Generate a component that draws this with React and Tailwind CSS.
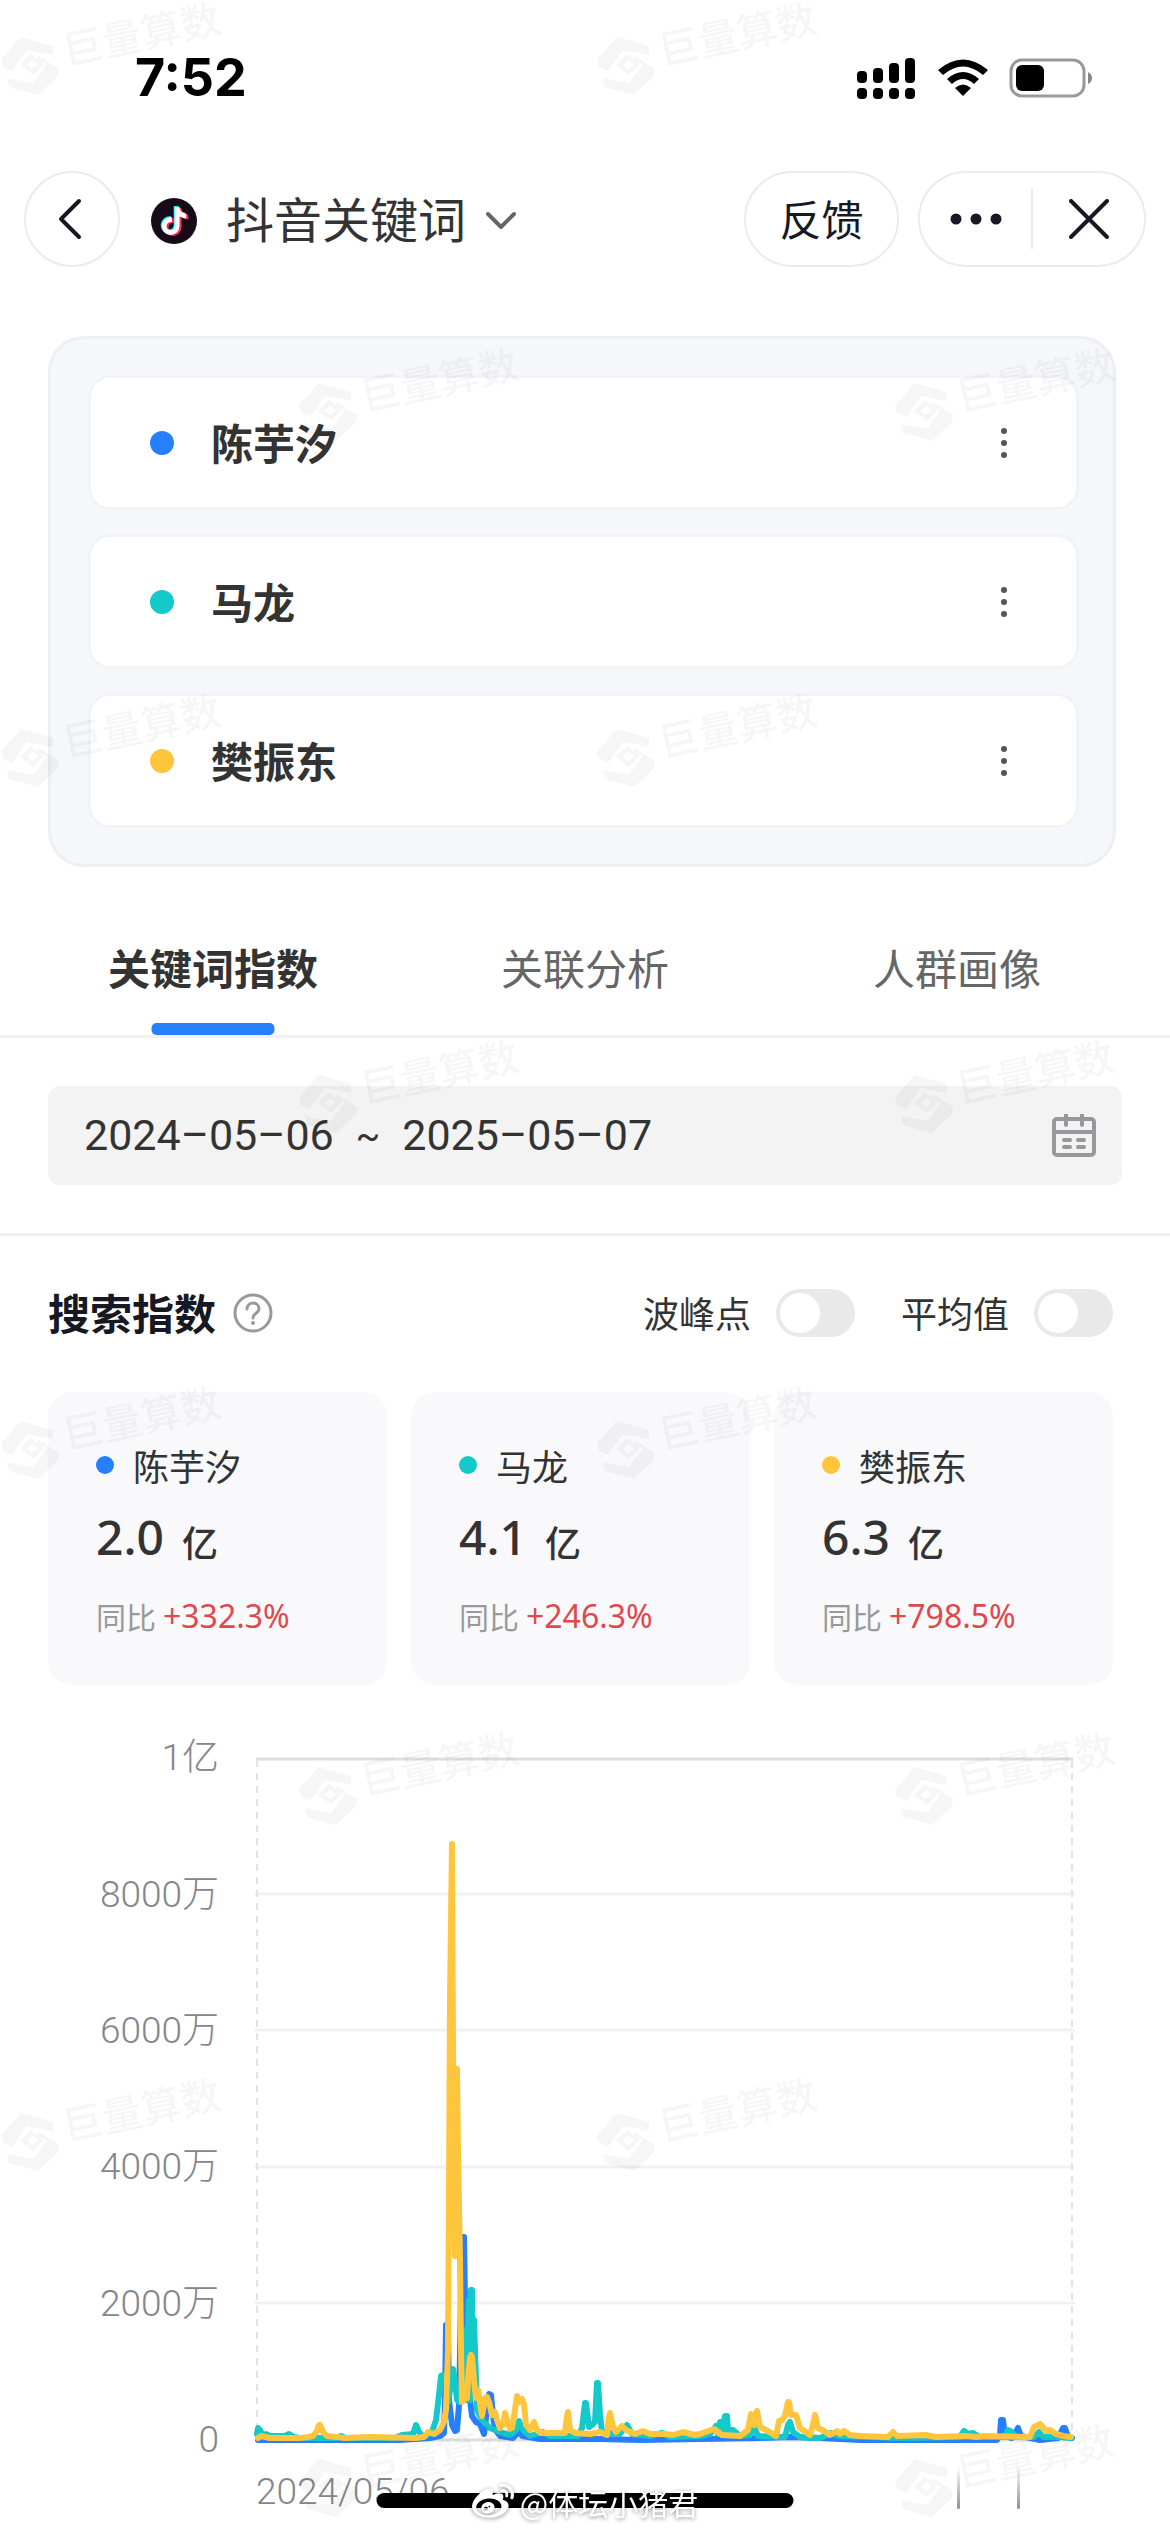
import React from "react";
import { FaTiktok, FaWeibo } from "react-icons/fa";

const SANS = "font-['Noto_Sans_CJK_SC',sans-serif]";
const LATIN = "font-['Roboto','Noto_Sans_CJK_SC',sans-serif]";
const NUMERIC = "font-['Noto_Sans','Noto_Sans_CJK_SC',sans-serif]";

const keywords = [
  { name: "陈芋汐", dot: "bg-[#267fff]", total: "2.0", growth: "+332.3%" },
  { name: "马龙", dot: "bg-[#14c9c9]", total: "4.1", growth: "+246.3%" },
  { name: "樊振东", dot: "bg-[#ffc53d]", total: "6.3", growth: "+798.5%" },
];

const tabs = ["关键词指数", "关联分析", "人群画像"];
const yTicks = ["1亿", "8000万", "6000万", "4000万", "2000万", "0"];

const blueLine =
  "258,2440 400,2440 430,2438 440,2436 444,2433 445,2400 446,2325 448,2325 449,2400 452,2425 455,2431 457,2430 459,2405 461,2300 463,2237 464,2237 465,2300 467,2395 470,2400 472,2416 476,2422 480,2424 484,2434 487,2410 489,2394 491,2395 493,2415 495,2429 500,2436 513,2438 516,2435 518,2428 522,2436 540,2439 600,2439 640,2440 700,2439 760,2438 790,2437 820,2438 860,2440 997,2440 1000,2435 1001,2420 1003,2420 1005,2436 1012,2438 1017,2430 1018,2428 1021,2436 1040,2440 1058,2438 1063,2428 1065,2428 1068,2437 1072,2438";
const tealLine =
  "257,2434 258,2428 260,2430 263,2436 266,2434 270,2436 285,2436 289,2434 294,2437 300,2438 336,2438 341,2436 346,2438 395,2438 402,2435 413,2434 416,2425 419,2432 424,2437 432,2432 436,2420 439,2395 441,2376 443,2375 446,2376 448,2402 451,2385 453,2369 455,2380 457,2400 459,2402 462,2400 464,2330 466,2400 469,2300 470,2400 471,2290 472,2290 473,2390 474,2320 475,2350 477,2410 482,2420 490,2428 500,2432 510,2435 516,2430 519,2421 523,2430 530,2436 543,2432 550,2436 578,2436 582,2428 585,2403 586,2403 589,2427 593,2424 595,2422 597,2383 598,2383 600,2415 602,2432 620,2434 627,2425 632,2434 650,2436 662,2433 670,2437 700,2436 710,2434 716,2426 718,2434 720,2422 722,2434 725,2416 727,2416 728,2430 733,2430 740,2436 750,2435 754,2427 758,2436 785,2437 788,2425 790,2422 793,2432 800,2437 820,2438 831,2433 840,2436 900,2438 960,2437 964,2431 968,2434 973,2433 980,2437 1005,2437 1008,2430 1012,2432 1016,2437 1034,2437 1039,2432 1043,2437 1060,2437 1071,2438";
const yellowLine =
  "258,2438 261,2436 270,2438 300,2438 308,2437 313,2436 317,2431 319,2425 320,2425 323,2432 327,2436 345,2438 370,2437 415,2438 424,2437 428,2432 434,2434 440,2430 444,2422 446,2410 448,2350 449,2200 450,2000 452,1844 453,2050 455,2256 456,2150 457,2069 458,2150 460,2260 461,2350 462,2402 465,2398 467,2398 468,2380 470,2357 471,2355 472,2357 474,2380 476,2398 478,2390 480,2402 482,2416 485,2398 487,2397 489,2402 492,2415 495,2412 497,2420 500,2428 503,2425 505,2413 507,2420 510,2429 512,2428 515,2410 517,2396 519,2402 522,2399 524,2404 526,2425 530,2430 534,2422 537,2430 541,2433 560,2433 565,2433 567,2416 568,2412 570,2430 575,2433 590,2434 600,2432 607,2435 609,2417 610,2413 613,2427 616,2432 622,2426 626,2430 635,2434 643,2431 650,2434 665,2434 673,2435 683,2432 695,2435 700,2434 714,2429 722,2435 740,2436 748,2430 751,2414 754,2425 757,2411 760,2427 768,2431 776,2436 779,2421 782,2420 785,2416 788,2402 789,2402 791,2415 796,2415 800,2428 810,2435 813,2425 815,2415 818,2428 824,2431 830,2435 837,2431 840,2434 844,2431 850,2435 860,2436 888,2437 893,2432 897,2436 926,2435 936,2437 966,2436 976,2437 984,2436 1030,2437 1034,2427 1040,2424 1046,2431 1050,2430 1056,2434 1063,2436 1071,2437";

function Watermark() {
  return (
    <div className="flex w-[596px] shrink-0 items-start">
      <svg width="60" height="60" viewBox="-1 -1 60 60" className="mt-[36px] shrink-0" fill="#000">
        <path d="M0 22 L20 0 L52 9 L52 18 L26 13 L11 34 L2 30 Z" />
        <path d="M6 41 L32 46 L46 27 L36 23 L38 19 L58 32 L57 39 L37 58 L8 50 Z" />
        <path d="M19 28 L30 17 L43 27 L32 38 Z M26 28 L31 32 L37 27 L31 23 Z" fillRule="evenodd" />
      </svg>
      <span className="mt-[8px] ml-[1px] -rotate-12 text-[40px] leading-[48px] font-medium">巨量算数</span>
    </div>
  );
}

function WatermarkLayer() {
  return (
    <div aria-hidden="true" className="pointer-events-none absolute inset-0 z-10 overflow-hidden opacity-[0.03]">
      {Array.from({ length: 8 }, (_, row) => (
        <div key={row} className={row % 2 ? "flex h-[346px] pl-[298px]" : "flex h-[346px]"}>
          <Watermark />
          <Watermark />
        </div>
      ))}
    </div>
  );
}

function StatusBar() {
  return (
    <div className="flex h-[156px] items-center justify-between pr-[77px] pl-[135px]">
      <time className="font-['Inter',sans-serif] text-[52px] font-bold text-black">7:52</time>
      <div className="flex items-center gap-[21px]">
        <svg width="60" height="42" viewBox="0 0 60 42" aria-label="信号">
          {[[0, 14, 12], [16, 11, 15], [32, 6, 20], [48, 1, 25]].map(([x, y, h]) => (
            <g key={x}>
              <rect x={x} y={y} width="10" height={h} rx="4" />
              <rect x={x} y="31" width="10" height="11" rx="4" />
            </g>
          ))}
        </svg>
        <svg width="50" height="38" viewBox="0 0 50 38" aria-label="无线网络">
          <path d="M0 11 Q25 -10 50 11 L45 16 Q25 -1 5 16 Z" />
          <path d="M9 20 Q25 6 41 20 L36 25 Q25 15 14 25 Z" />
          <path d="M17 29 Q25 22 33 29 L25 37 Z" />
        </svg>
        <svg width="84" height="40" viewBox="0 0 84 40" aria-label="电池">
          <rect x="2" y="2" width="73" height="36" rx="11" fill="none" stroke="#999" strokeWidth="3" />
          <rect x="7" y="7" width="28" height="26" rx="6" />
          <path d="M79 14 Q83 16 83 20 Q83 24 79 26 Z" fill="#888" />
        </svg>
      </div>
    </div>
  );
}

function Header() {
  const pill = "h-24 rounded-[48px] border-2 border-[#ebebec] bg-white";
  return (
    <header className="mt-[15px] flex items-center px-6">
      <button aria-label="返回" className={`${pill} flex w-24 shrink-0 items-center justify-center`}>
        <svg width="24" height="42" viewBox="0 0 24 42" fill="none" stroke="#161823" strokeWidth="4" strokeLinecap="round" strokeLinejoin="round" className="mr-1">
          <path d="M21 3 L3 21 L21 39" />
        </svg>
      </button>
      <button className="ml-[31px] flex items-center text-[#333]">
        <span className="relative mt-1 flex size-[46px] items-center justify-center rounded-full bg-[#170b1a]">
          <FaTiktok size={28} className="absolute -translate-x-px -translate-y-px text-[#25f4ee]" />
          <FaTiktok size={28} className="absolute translate-x-[2px] translate-y-px text-[#fe2c55]" />
          <FaTiktok size={28} className="absolute text-white" />
        </span>
        <span className="ml-[29px] pb-1 text-[48px] leading-[56px]">抖音关键词</span>
        <svg width="30" height="20" viewBox="0 0 30 20" fill="none" stroke="#666" strokeWidth="4" strokeLinecap="round" strokeLinejoin="round" className="mt-1 ml-[20px]">
          <path d="M2 3 L15 16 L28 3" />
        </svg>
      </button>
      <button className={`${pill} ml-auto w-[155px] pb-1 text-[42px] text-[#161823]`}>反馈</button>
      <div className={`${pill} ml-[19px] flex w-[228px] items-center`}>
        <button aria-label="更多" className="flex h-full flex-1 items-center justify-center">
          <svg width="52" height="12" viewBox="0 0 52 12" fill="#161823">
            <circle cx="6" cy="6" r="5.5" /><circle cx="26" cy="6" r="5.5" /><circle cx="46" cy="6" r="5.5" />
          </svg>
        </button>
        <span className="h-[60px] w-[2px] bg-[#e8e8e8]" />
        <button aria-label="关闭" className="flex h-full flex-1 items-center justify-center">
          <svg width="40" height="40" viewBox="0 0 40 40" fill="none" stroke="#161823" strokeWidth="4" strokeLinecap="round">
            <path d="M2 2 L38 38 M38 2 L2 38" />
          </svg>
        </button>
      </div>
    </header>
  );
}

function KeywordPanel() {
  return (
    <section className="mt-[69px] mr-[54px] ml-[48px] rounded-[36px] border-[3px] border-[#eeeff0] bg-[#f6f7fb] py-[36px] pr-[34px] pl-[37px]">
      <ul className="flex flex-col gap-[24px]">
        {keywords.map((k) => (
          <li key={k.name} className="flex h-[135px] items-center rounded-[22px] border-[3px] border-[#f2f3f5] bg-white pr-[60px] pl-[59px]">
            <span className={`size-6 rounded-full ${k.dot}`} />
            <span className="ml-[37px] pb-[2px] text-[42px] font-bold text-[#333]">{k.name}</span>
            <button aria-label={`${k.name} 更多操作`} className="ml-auto flex h-12 w-6 items-center justify-center">
              <svg width="6" height="30" viewBox="0 0 6 30" fill="#555">
                <circle cx="3" cy="3" r="3" /><circle cx="3" cy="15" r="3" /><circle cx="3" cy="27" r="3" />
              </svg>
            </button>
          </li>
        ))}
      </ul>
    </section>
  );
}

function Tabs() {
  return (
    <nav role="tablist" className="mt-[34px] flex border-b-[3px] border-[#f1f1f2] px-[27px]">
      {tabs.map((t, i) => (
        <button
          key={t}
          role="tab"
          aria-selected={i === 0}
          className={i === 0 ? "relative h-[134px] flex-1 pb-1 text-[42px] font-bold text-[#333]" : "h-[134px] flex-1 pb-1 text-[42px] text-[#666]"}
        >
          {t}
          {i === 0 && <span className="absolute bottom-0 left-1/2 h-3 w-[123px] -translate-x-1/2 rounded-[5px] bg-[#267fff]" />}
        </button>
      ))}
    </nav>
  );
}

function DateRange() {
  return (
    <section className="border-b-[3px] border-[#f1f1f2] p-[48px]">
      <button aria-label="选择日期范围" className={`flex h-[99px] w-full items-center gap-[22px] rounded-xl bg-[#f3f3f4] pr-[26px] pl-[36px] text-[43px] text-[#333] ${LATIN}`}>
        <span>2024–05–06</span>
        <span className="text-[36px]">~</span>
        <span>2025–05–07</span>
        <svg width="44" height="44" viewBox="0 0 44 44" fill="none" stroke="#97989e" strokeWidth="4" className="ml-auto">
          <rect x="2" y="5" width="40" height="36" rx="3" />
          <path d="M2 18 H42" />
          <path d="M14 1 V11 M30 1 V11" strokeLinecap="round" />
          <path d="M12 26 H18 M26 26 H32 M12 33 H18 M26 33 H32" strokeLinecap="round" />
        </svg>
      </button>
    </section>
  );
}

function Toggle({ label }) {
  return (
    <label className="flex items-center gap-[25px] text-[36px] leading-[48px] text-[#333]">
      <span className="pb-[2px]">{label}</span>
      <input
        type="checkbox"
        role="switch"
        className="h-12 w-[79px] appearance-none rounded-full bg-[#e9e9ea] p-1 before:block before:size-10 before:rounded-full before:bg-white checked:bg-[#267fff] checked:before:ml-auto"
      />
    </label>
  );
}

function SearchIndex() {
  return (
    <section className="pt-[52px]">
      <div className="mr-[57px] ml-[48px] flex items-center">
        <h2 className="pb-[2px] text-[42px] leading-[48px] font-bold text-[#161823]">搜索指数</h2>
        <button aria-label="说明" className="ml-[17px]">
          <svg width="40" height="40" viewBox="0 0 40 40" fill="none" stroke="#999" strokeWidth="3" strokeLinecap="round" strokeLinejoin="round">
            <circle cx="20" cy="20" r="18" />
            <path d="M14 16 C14 8 26 8 26 16 C26 20 20 20 20 25" />
            <circle cx="20" cy="30" r="1" fill="#999" strokeWidth="2" />
          </svg>
        </button>
        <div className="ml-auto flex gap-[46px]">
          <Toggle label="波峰点" />
          <Toggle label="平均值" />
        </div>
      </div>
      <div className="mt-[54px] mr-[57px] ml-[48px] grid grid-cols-3 gap-6">
        {keywords.map((k) => (
          <article key={k.name} className="rounded-3xl bg-[#f9f9fb] px-[48px] pt-[46px] pb-[45px]">
            <div className="flex h-[54px] items-center gap-[19px] text-[36px] text-[#333]">
              <span className={`size-[18px] rounded-full ${k.dot}`} />
              {k.name}
            </div>
            <div className="mt-[12px] flex h-[66px] items-center gap-[18px] font-medium text-[#333]">
              <span className={`text-[48px] leading-[66px] ${NUMERIC}`}>{k.total}</span>
              <span className="mt-[8px] text-[36px] leading-[48px]">亿</span>
            </div>
            <div className="mt-[22px] flex h-[48px] items-center gap-[7px]">
              <span className="text-[30px] text-[#999]">同比</span>
              <span className={`text-[32px] text-[#e0484d] ${NUMERIC}`}>{k.growth}</span>
            </div>
          </article>
        ))}
      </div>
    </section>
  );
}

function TrendChart() {
  return (
    <section className={`mt-[73px] text-[37px] font-light text-[#85868a] ${LATIN}`}>
      <div className="flex pr-[97px]">
        <div className="flex w-[219px] shrink-0 flex-col justify-between">
          {yTicks.map((t) => (
            <span key={t} className="flex h-0 items-center justify-end">{t}</span>
          ))}
        </div>
        <svg
          viewBox="256 1758 817 682"
          preserveAspectRatio="none"
          role="img"
          aria-label="搜索指数趋势图"
          className="ml-[37px] h-[682px] min-w-0 flex-1 overflow-visible"
          fill="none"
          strokeLinecap="round"
          strokeLinejoin="round"
        >
          <g stroke="#f1f1f2" strokeWidth="3">
            <path d="M256 1894 H1073 M256 2030 H1073 M256 2167 H1073 M256 2303 H1073" />
          </g>
          <path d="M256 1759 H1073 M256 2440 H1073" stroke="#dfdfe0" strokeWidth="3" strokeLinecap="butt" />
          <path d="M257 1760 V2440 M1072 1760 V2440" stroke="#e3e3e4" strokeWidth="2" strokeDasharray="7 6" strokeLinecap="butt" />
          <polyline points={blueLine} stroke="#267fff" strokeWidth="6" />
          <polyline points={tealLine} stroke="#14c9c9" strokeWidth="6" />
          <polyline points={yellowLine} stroke="#ffc53d" strokeWidth="6" />
        </svg>
      </div>
      <div className="mt-[31px] flex items-start justify-between pr-[97px] pl-[256px] leading-[42px]">
        <span>2024/05/06</span>
        <span aria-hidden="true" className="flex w-[116px] gap-[57px]">
          <span className="-mt-1 h-[42px] w-[3px] rounded-b bg-gradient-to-b from-transparent to-[#8f9094]" />
          <span className="-mt-1 h-[42px] w-[3px] rounded-b bg-gradient-to-b from-transparent to-[#8f9094]" />
        </span>
      </div>
    </section>
  );
}

function BottomOverlay() {
  return (
    <div className="absolute inset-x-0 bottom-0 z-20 h-[58px]">
      <div className="absolute bottom-6 left-1/2 h-[15px] w-[417px] -translate-x-1/2 rounded-full bg-black" />
      <div className="absolute inset-x-0 bottom-[8px] flex items-center justify-center gap-[6px] text-[30px] leading-[44px] text-white [filter:drop-shadow(0_1px_2px_rgba(0,0,0,0.45))]">
        <FaWeibo size={42} />
        <span>@体坛小猪君</span>
      </div>
    </div>
  );
}

export default function App() {
  return (
    <main className={`relative min-h-screen overflow-hidden bg-white ${SANS}`}>
      <StatusBar />
      <Header />
      <KeywordPanel />
      <Tabs />
      <DateRange />
      <SearchIndex />
      <TrendChart />
      <WatermarkLayer />
      <BottomOverlay />
    </main>
  );
}
